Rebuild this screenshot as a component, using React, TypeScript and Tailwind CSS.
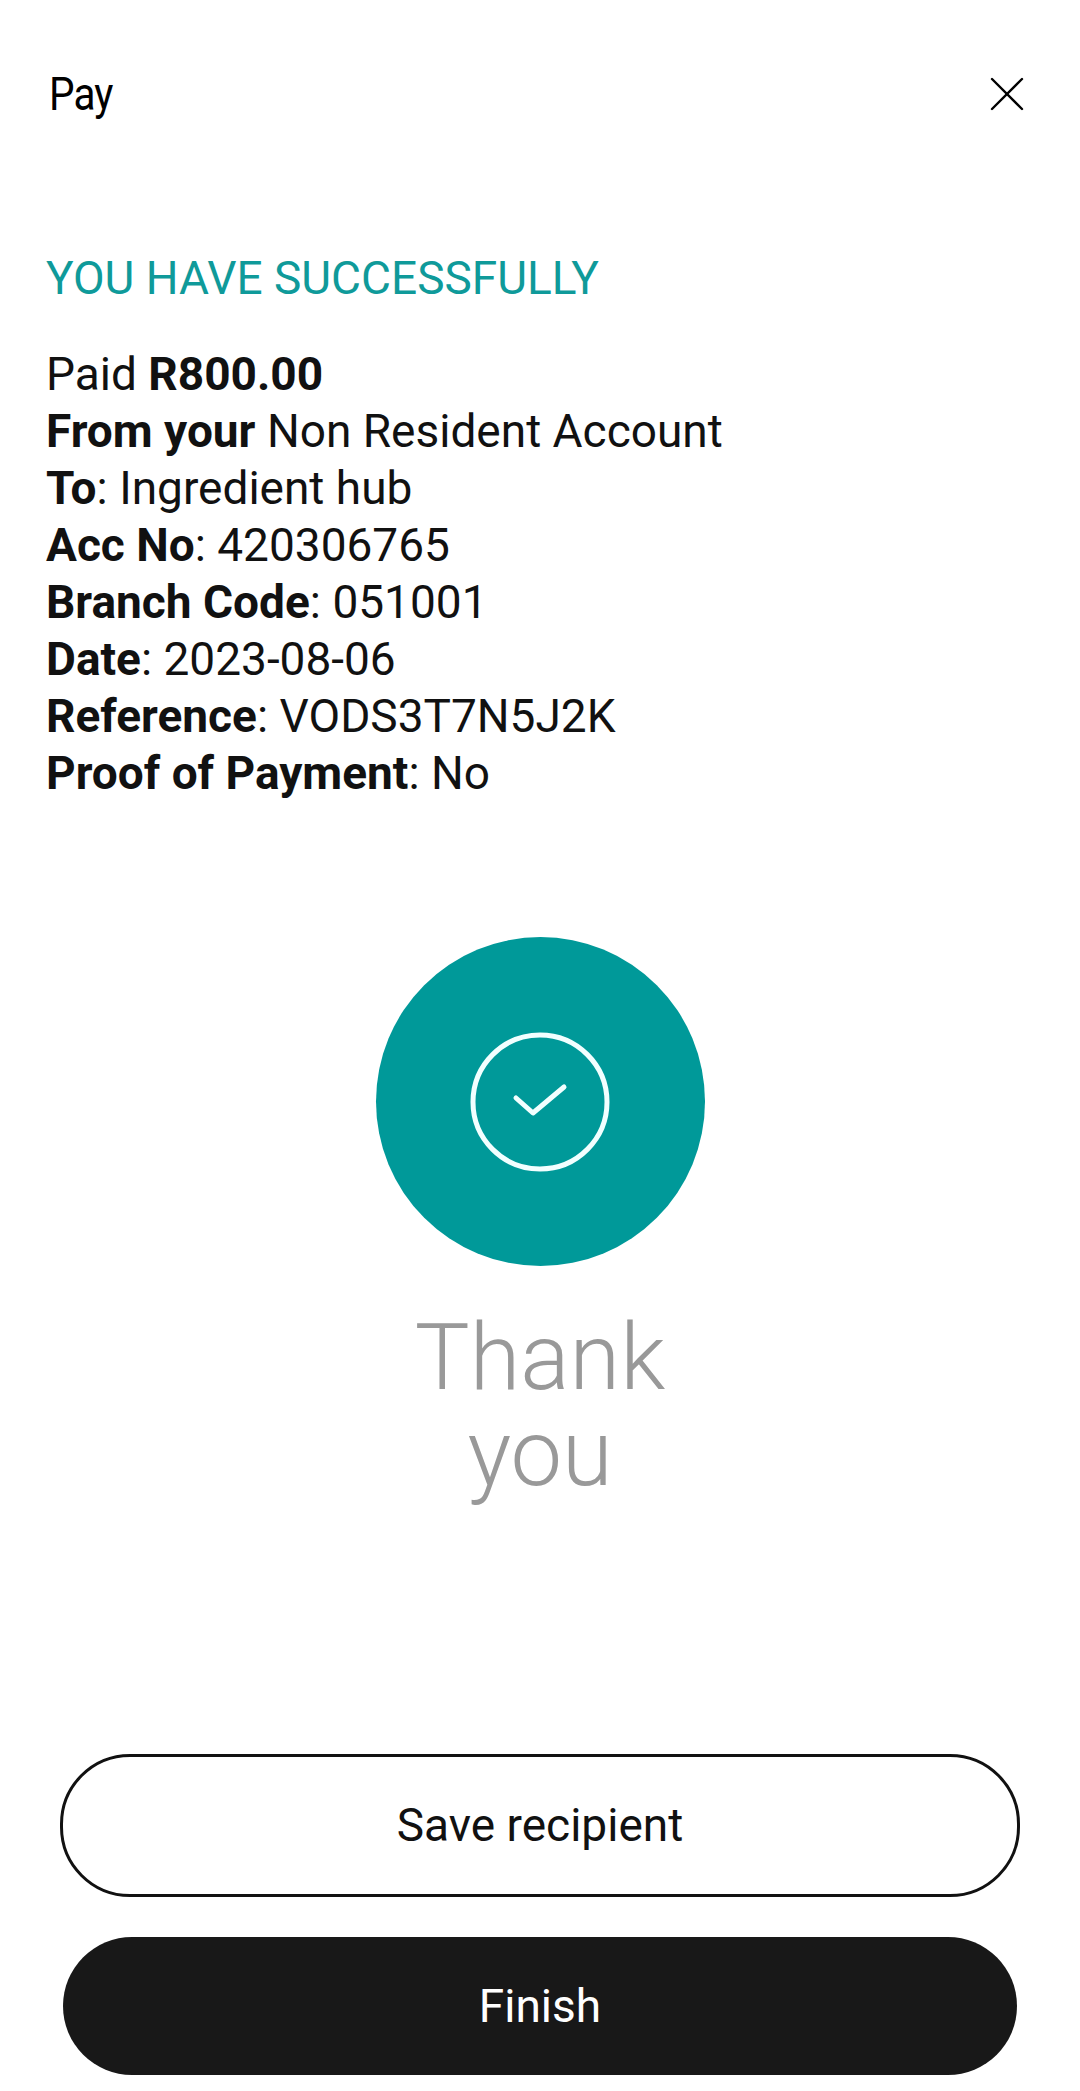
import { X } from "lucide-react";

const details = [
	[["Paid ", false], ["R800.00", true]],
	[["From your ", true], ["Non Resident Account", false]],
	[["To", true], [": Ingredient hub", false]],
	[["Acc No", true], [": 420306765", false]],
	[["Branch Code", true], [": 051001", false]],
	[["Date", true], [": 2023-08-06", false]],
	[["Reference", true], [": VODS3T7N5J2K", false]],
	[["Proof of Payment", true], [": No", false]],
] as [string, boolean][][];

export default function App() {
	return (
		<div className="flex h-[2091px] w-[1080px] flex-col bg-white font-['Roboto',sans-serif] text-black">
			{/* Header */}
			<div className="flex items-center justify-between pl-[49px] pr-[43px] pt-[64px]">
				<span className="text-[46px] leading-[54px] tracking-[-1px] [transform:scaleX(0.88)] origin-left">Pay</span>
				<X size={60} strokeWidth={2.4} absoluteStrokeWidth className="text-black" />
			</div>

			<h1 className="mt-[127px] pl-[46px] text-[46px] leading-[54px] text-[#0f9a9a]">YOU HAVE SUCCESSFULLY</h1>

			{/* Payment details */}
			<div className="mt-[41px] pl-[46px] text-[46px] leading-[57px] text-[#111]">
				{details.map((line, i) => (
					<div key={i}>
						{line.map(([text, bold], j) => (
							<span key={j} className={bold ? "font-bold" : "font-normal"}>
								{text}
							</span>
						))}
					</div>
				))}
			</div>

			{/* Success badge */}
			<div className="mt-[135px] flex flex-col items-center">
				<div className="flex h-[329px] w-[329px] items-center justify-center rounded-full bg-[#009999]">
					<svg width="142" height="142" viewBox="0 0 142 142" fill="none" stroke="#f2ffff" strokeWidth="5">
						<circle cx="71" cy="71" r="67" />
						<path d="M47 67 L64 82 L95 56" strokeLinecap="round" strokeLinejoin="round" />
					</svg>
				</div>
				<div className="mt-[44px] text-center text-[92px] font-light leading-[96px] text-[#999999]">
					Thank
					<br />
					you
				</div>
			</div>

			{/* Actions */}
			<div className="mt-auto flex flex-col items-center gap-[40px] pb-[16px]">
				<button type="button" className="flex h-[143px] w-[960px] items-center justify-center rounded-[70px] border-[3px] border-[#111] bg-white text-[46px] text-[#111]">
					Save recipient
				</button>
				<button type="button" className="flex h-[138px] w-[954px] items-center justify-center rounded-[69px] bg-[#181818] text-[46px] text-white">
					Finish
				</button>
			</div>
		</div>
	);
}
